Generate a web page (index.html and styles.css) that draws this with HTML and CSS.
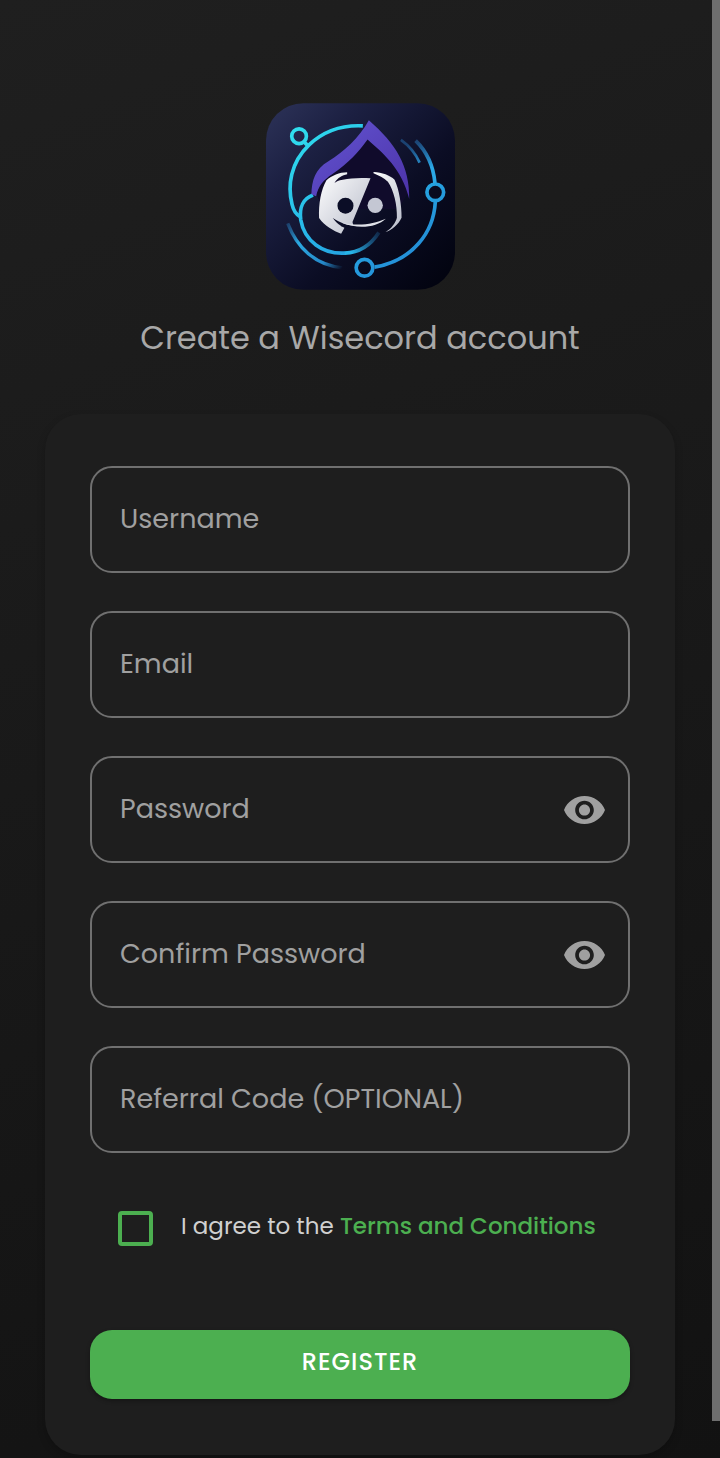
FILE: index.html
```html
<!DOCTYPE html>
<html lang="en">
<head>
  <meta charset="UTF-8" />
  <meta name="viewport" content="width=device-width, initial-scale=1.0"/>
  <title>Wisecord - Register</title>
  <link rel="stylesheet" href="styles.css">
</head>
<body>
  <main class="page">
    <svg class="logo" viewBox="33 33 566 559" role="img" aria-label="Wisecord">
      <defs>
        <linearGradient id="bg" x1="0" y1="0" x2="1" y2="1">
          <stop offset="0" stop-color="#2d3359"/>
          <stop offset="0.25" stop-color="#1c2042"/>
          <stop offset="0.6" stop-color="#0b0d24"/>
          <stop offset="1" stop-color="#01020d"/>
        </linearGradient>
        <linearGradient id="ring" gradientUnits="userSpaceOnUse" x1="110" y1="100" x2="480" y2="540">
          <stop offset="0" stop-color="#30e0ee"/>
          <stop offset="0.5" stop-color="#27b4e8"/>
          <stop offset="1" stop-color="#2388d4"/>
        </linearGradient>
        <linearGradient id="fadeUp" gradientUnits="userSpaceOnUse" x1="520" y1="230" x2="480" y2="145">
          <stop offset="0" stop-color="#2ba8e6"/>
          <stop offset="1" stop-color="#2b88d6" stop-opacity="0.4"/>
        </linearGradient>
        <linearGradient id="fadeLeft" gradientUnits="userSpaceOnUse" x1="98" y1="390" x2="262" y2="526">
          <stop offset="0" stop-color="#2b8fd6" stop-opacity="0.3"/>
          <stop offset="0.3" stop-color="#2ba8e0"/>
          <stop offset="0.75" stop-color="#2588c8"/>
          <stop offset="1" stop-color="#2588c8" stop-opacity="0"/>
        </linearGradient>
        <linearGradient id="fadeRight" gradientUnits="userSpaceOnUse" x1="290" y1="480" x2="374" y2="416">
          <stop offset="0" stop-color="#27b4e8"/>
          <stop offset="1" stop-color="#2480c4" stop-opacity="0.2"/>
        </linearGradient>
        <linearGradient id="hood" x1="0" y1="0" x2="1" y2="1">
          <stop offset="0" stop-color="#6355d2"/>
          <stop offset="1" stop-color="#4c32a8"/>
        </linearGradient>
        <linearGradient id="face" x1="0" y1="0" x2="1" y2="1">
          <stop offset="0" stop-color="#ffffff"/>
          <stop offset="1" stop-color="#b6bac8"/>
        </linearGradient>
      </defs>
      <rect x="33" y="33" width="566" height="559" rx="112" fill="url(#bg)"/>
      <g fill="none" stroke="url(#ring)" stroke-width="11">
        <path d="M323 101C260 98 204 118 162 158C106 212 97 280 111 336Q117 362 134 372"/>
        <circle cx="132" cy="132" r="22"/>
        <path d="M147 149l12 12"/>
        <circle cx="540" cy="300" r="25"/>
        <circle cx="328" cy="526" r="25"/>
        <path d="M540 329C535 420 472 505 358 524"/>
        <path d="M174 308C145 318 132 345 137 382C148 446 203 486 270 482"/>
      </g>
      <path d="M269 482C312 480 344 462 371 420" fill="none" stroke="url(#fadeRight)" stroke-width="11"/>
      <path d="M481 145C513 176 534 220 539 272" fill="none" stroke="url(#fadeUp)" stroke-width="11"/>
      <path d="M437 143Q475 170 493 211" fill="none" stroke="url(#fadeUp)" stroke-width="8"/>
      <path d="M98 393C126 466 180 518 262 526" fill="none" stroke="url(#fadeLeft)" stroke-width="10"/>
      <path d="M337 141C290 205 212 230 183 305L205 350L430 350L459 300C433 220 396 194 337 141Z" fill="#100b2b"/>
      <path d="M341 84C310 139 267 177 220 207C180 230 170 265 169 306L183 312C190 280 204 264 232 245C283 211 309 180 337 142C386 185 440 230 462 320C463 220 422 155 341 84Z" fill="url(#hood)"/>
      <path d="M276 240C253 240 230 250 214 264C198 292 190 335 192 377C209 402 235 415 258 424L268 406L256 400C268 403 280 404 296 405L292 389L318 326L346 258C314 255 286 258 263 262C250 264 244 267 238 272C248 256 262 249 276 246Z" fill="url(#face)"/>
      <path d="M355 239C381 240 404 249 418 262C432 292 439 337 439 376C429 397 410 413 391 419C410 407 421 391 425 376C426 337 416 295 398 268C386 256 370 250 355 243Z" fill="url(#face)"/>
      <circle cx="271" cy="340" r="24" fill="#0b0d26"/>
      <circle cx="360" cy="339" r="23" fill="#c4c7d3"/>
      <path d="M233 377C256 393 276 398 300 401L300 408C280 408 262 405 256 399C247 394 240 387 233 377Z" fill="#0b0d26"/>
      <path d="M262 392C316 402 353 395 392 379C365 404 312 412 262 392Z" fill="#dfe1e8"/>
    </svg>
    <h1 class="title">Create a Wisecord account</h1>

    <form class="card">
      <div class="field">
        <input type="text" id="username" autocomplete="username">
        <label for="username">Username</label>
      </div>
      <div class="field">
        <input type="email" id="email" autocomplete="email">
        <label for="email">Email</label>
      </div>
      <div class="field">
        <input type="password" id="password">
        <label for="password">Password</label>
        <button type="button" class="eye" aria-label="Show password">
          <svg viewBox="1 4.5 22 15"><path d="M12 4.5C7 4.5 2.73 7.61 1 12c1.73 4.39 6 7.5 11 7.5s9.27-3.11 11-7.5c-1.73-4.39-6-7.5-11-7.5zM12 17c-2.76 0-5-2.24-5-5s2.24-5 5-5 5 2.24 5 5-2.24 5-5 5zm0-8c-1.66 0-3 1.34-3 3s1.34 3 3 3 3-1.34 3-3-1.34-3-3-3z"/></svg>
        </button>
      </div>
      <div class="field">
        <input type="password" id="confirm">
        <label for="confirm">Confirm Password</label>
        <button type="button" class="eye" aria-label="Show password">
          <svg viewBox="1 4.5 22 15"><path d="M12 4.5C7 4.5 2.73 7.61 1 12c1.73 4.39 6 7.5 11 7.5s9.27-3.11 11-7.5c-1.73-4.39-6-7.5-11-7.5zM12 17c-2.76 0-5-2.24-5-5s2.24-5 5-5 5 2.24 5 5-2.24 5-5 5zm0-8c-1.66 0-3 1.34-3 3s1.34 3 3 3 3-1.34 3-3-1.34-3-3-3z"/></svg>
        </button>
      </div>
      <div class="field">
        <input type="text" id="referral">
        <label for="referral">Referral Code (OPTIONAL)</label>
      </div>

      <div class="agree">
        <input type="checkbox" id="agree">
        <label for="agree">I agree to the <a href="#">Terms and Conditions</a></label>
      </div>

      <button type="submit" class="register-btn">REGISTER</button>
    </form>
  </main>
  <div class="scroll-thumb"></div>

  <script>
    document.querySelectorAll(".field input").forEach(input => {
      input.oninput = () => input.parentElement.classList.toggle("filled", input.value !== "");
    });

    document.querySelectorAll(".eye").forEach(btn => {
      btn.onclick = () => {
        const input = btn.parentElement.querySelector("input");
        input.type = input.type === "password" ? "text" : "password";
      };
    });
  </script>
</body>
</html>
```
FILE: styles.css
```css
* {
  box-sizing: border-box;
}

html {
  scrollbar-width: none;
}

body {
  margin: 0;
  min-height: 100vh;
  font-family: Poppins, Inter, sans-serif;
  background: linear-gradient(160deg, #1f1f1f, #121212);
  color: #d0d0d0;
}

.page {
  display: flex;
  flex-direction: column;
  align-items: center;
  padding: 103px 45px 4px;
}

.logo {
  width: 189px;
  height: 187px;
}

.title {
  margin: 24px 0 52px;
  font-size: 32px;
  font-weight: 400;
  line-height: 48px;
  color: #a8a8a8;
}

.card {
  display: flex;
  flex-direction: column;
  gap: 38px;
  width: 100%;
  padding: 52px 45px 56px;
  border-radius: 36px;
  background: #1e1e1e;
  box-shadow: 0 4px 8px rgba(0, 0, 0, 0.2);
}

.field {
  position: relative;
}

.field input {
  display: block;
  width: 100%;
  height: 107px;
  padding: 0 28px;
  border: 2px solid #707070;
  border-radius: 22px;
  outline: none;
  background: transparent;
  font: inherit;
  font-size: 27px;
  color: #fff;
}

.field input:focus {
  border-color: #4caf50;
}

.field label {
  position: absolute;
  top: 0;
  left: 30px;
  font-size: 27px;
  line-height: 106px;
  color: #a0a0a0;
  pointer-events: none;
}

.field.filled label {
  display: none;
}

.eye {
  position: absolute;
  top: 0;
  right: 25px;
  height: 100%;
  padding: 0;
  border: none;
  background: none;
  cursor: pointer;
}

.eye svg {
  display: block;
  width: 41px;
  height: 28px;
  fill: #a0a0a0;
}

.agree {
  display: flex;
  align-items: flex-start;
  gap: 28px;
  padding: 20px 28px 46px;
}

.agree input {
  appearance: none;
  flex: none;
  width: 35px;
  height: 35px;
  margin: 0;
  border: 4px solid #4caf50;
  border-radius: 4px;
}

.agree input:checked {
  background: #4caf50;
}

.agree label {
  font-size: 23px;
  line-height: 30px;
  white-space: nowrap;
}

.agree a {
  color: #4caf50;
  font-weight: 500;
  text-decoration: none;
}

.register-btn {
  height: 69px;
  padding: 0 0 6px;
  border: none;
  border-radius: 22px;
  background: #4caf50;
  box-shadow: 0 2px 4px rgba(0, 0, 0, 0.3);
  font: inherit;
  font-size: 24px;
  font-weight: 500;
  letter-spacing: 1px;
  color: #fff;
  cursor: pointer;
}

/* thin scroll indicator over the right edge */
.scroll-thumb {
  position: fixed;
  top: 0;
  right: 0;
  bottom: 37px;
  width: 8px;
  background: #6e6e6e;
}
```
